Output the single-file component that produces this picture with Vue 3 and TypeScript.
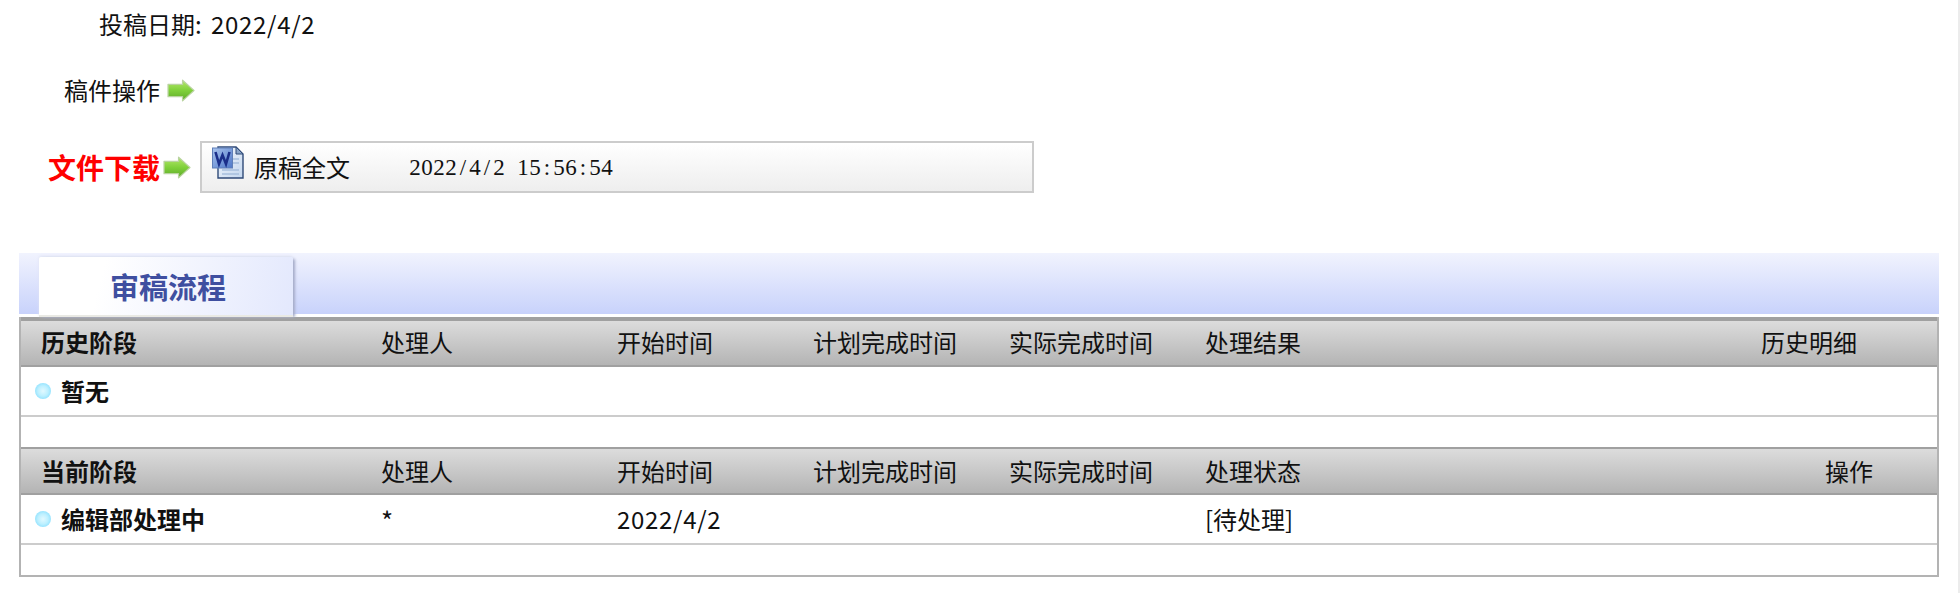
<script setup lang="ts">
interface Section {
  head: string[];
  stage: string;
  handler: string;
  start: string;
  status: string;
  lastPad: boolean;
}

const sections: Section[] = [
  {
    head: ['历史阶段', '处理人', '开始时间', '计划完成时间', '实际完成时间', '处理结果', '历史明细'],
    stage: '暂无',
    handler: '',
    start: '',
    status: '',
    lastPad: false
  },
  {
    head: ['当前阶段', '处理人', '开始时间', '计划完成时间', '实际完成时间', '处理状态', '操作'],
    stage: '编辑部处理中',
    handler: '*',
    start: '2022/4/2',
    status: '[待处理]',
    lastPad: true
  }
];

// the time is set in fixed 12px cells, like the bitmap font it imitates
const fileTime = '2022/4/2 15:56:54'.split('');
</script>

<template>
  <div class="page">
    <div class="submit-date">
      <span class="date-label">投稿日期:</span>
      <span class="date-value">2022/4/2</span>
    </div>

    <div class="action-row">
      <span class="action-label">稿件操作</span>
      <svg class="arrow" viewBox="0 0 27 22" width="28" height="23">
        <defs>
          <linearGradient id="arrowFill" x1="0" y1="0" x2="0" y2="1">
            <stop offset="0" stop-color="#b5e76c" />
            <stop offset="0.5" stop-color="#7fd03a" />
            <stop offset="1" stop-color="#5da92a" />
          </linearGradient>
        </defs>
        <path d="M1 5H15V1L26 11L15 21V17H1Z" fill="url(#arrowFill)" stroke="#b9d3a0" stroke-width="1.2" stroke-linejoin="round" />
      </svg>
    </div>

    <div class="download-row">
      <span class="download-label">文件下载</span>
      <svg class="arrow arrow-small" viewBox="0 0 27 22" width="28" height="23">
        <path d="M1 5H15V1L26 11L15 21V17H1Z" fill="url(#arrowFill)" stroke="#b9d3a0" stroke-width="1.2" stroke-linejoin="round" />
      </svg>
      <div class="file-box">
        <svg class="word-icon" viewBox="0 0 32 33" width="32" height="33">
          <defs>
            <linearGradient id="sheet" x1="0" y1="0" x2="1" y2="1">
              <stop offset="0" stop-color="#f4f8fd" />
              <stop offset="1" stop-color="#c3d6ee" />
            </linearGradient>
            <linearGradient id="tile" x1="0" y1="0" x2="1" y2="1">
              <stop offset="0" stop-color="#a9c4ee" />
              <stop offset="1" stop-color="#4f78c8" />
            </linearGradient>
          </defs>
          <path d="M6 1H24L31 8V32H6Z" fill="url(#sheet)" stroke="#2f4a78" stroke-width="1.4" />
          <path d="M24 1V8H31Z" fill="#8aa5c9" stroke="#2f4a78" stroke-width="1" />
          <path d="M21 13H27M21 17H27M10 24H27M10 28H27" stroke="#a6bfdd" stroke-width="1.4" />
          <rect x="0.5" y="2" width="20" height="20" fill="url(#tile)" stroke="#5f7fb8" stroke-width="1" />
          <path d="M3.5 6L7 18L10.5 9L14 18L17.5 6" fill="none" stroke="#1b2f8a" stroke-width="2.6" />
        </svg>
        <span class="file-name">原稿全文</span>
        <span class="file-time">
          <span v-for="(ch, i) in fileTime" :key="i" class="time-cell">{{ ch }}</span>
        </span>
      </div>
    </div>

    <div class="tab-band">
      <div class="tab">审稿流程</div>
    </div>

    <div class="flow-table">
      <section v-for="sec in sections" :key="sec.stage">
        <div class="grid head">
          <div
            v-for="(title, i) in sec.head"
            :key="title"
            :class="{ 'stage-head': i === 0, 'last-pad': i === 6 && sec.lastPad }"
          >{{ title }}</div>
        </div>
        <div class="grid row">
          <div class="stage-cell"><span class="dot"></span>{{ sec.stage }}</div>
          <div class="handler-cell">{{ sec.handler }}</div>
          <div class="start-cell">{{ sec.start }}</div>
          <div></div>
          <div></div>
          <div>{{ sec.status }}</div>
          <div></div>
        </div>
        <div class="blank"></div>
      </section>
    </div>
  </div>
</template>

<style scoped>
.page {
  box-sizing: border-box;
  width: 1960px;
  height: 593px;
  padding: 0 19px 0 19px;
  border-right: 2px solid #ececec;
  overflow: hidden;
  color: #111;
  font-family: "Noto Sans CJK SC", "Liberation Sans", sans-serif;
  font-size: 24px;
  line-height: 32px;
}

.submit-date {
  display: flex;
  box-sizing: border-box;
  height: 50px;
  align-items: center;
  padding: 0 0 2px 80px;
}

.date-label {
  width: 112px;
}

.date-value,
.start-cell {
  letter-spacing: 0.7px;
}

.action-row {
  display: flex;
  height: 80px;
  align-items: center;
  padding-left: 45px;
}

.arrow {
  margin-left: 7px;
}

.download-row {
  display: flex;
  align-items: center;
  height: 52px;
  margin-top: 11px;
  padding-left: 29px;
}

.download-label {
  color: #f00;
  font-size: 28px;
  font-weight: 700;
}

.arrow-small {
  margin-left: 3px;
  margin-right: 9px;
}

.file-box {
  box-sizing: border-box;
  display: flex;
  align-items: center;
  width: 834px;
  height: 52px;
  padding-left: 10px;
  border: 2px solid #ccc;
  background: linear-gradient(#fff, #eee);
}

.word-icon {
  margin-top: -9px;
}

.file-name {
  margin-left: 10px;
  width: 155px;
}

.file-time {
  display: flex;
  font-family: "Liberation Serif", serif;
  font-size: 23px;
  margin-top: 1px;
}

.time-cell {
  width: 12px;
  min-height: 1px;
  text-align: center;
  white-space: pre;
}

.tab-band {
  display: flex;
  box-sizing: border-box;
  height: 64px;
  margin-top: 60px;
  padding: 4px 0 0 20px;
  background: linear-gradient(#f1f3fe, #c8d2fb 61px, #fff 61px);
}

.tab {
  box-sizing: border-box;
  width: 254px;
  height: 60px;
  padding-left: 4px;
  text-align: center;
  line-height: 58px;
  color: #3f4fa0;
  font-size: 29px;
  font-weight: 700;
  background: linear-gradient(105deg, #fff 25%, #e3e8fd);
  border-bottom: 2px solid #e9e9e4;
  box-shadow: 3px 1px 3px -1px #a4abc8, 0 -1px 3px #dfe3f2;
  border-radius: 2px 2px 0 0;
}

.flow-table {
  box-sizing: border-box;
  height: 260px;
  border: 2px solid #b3b3b3;
  border-top: 0;
}

.grid {
  display: grid;
  grid-template-columns: 360px 236px 196px 196px 196px 556px 176px;
  align-items: center;
}

.head {
  box-sizing: border-box;
  height: 50px;
  padding-bottom: 2px;
  border-top: 4px solid #a0a0a0;
  border-bottom: 2px solid #a0a0a0;
  background: linear-gradient(#dcdcdc, #b4b4b4);
}

section + section .head {
  height: 48px;
  padding-bottom: 0;
  border-top-width: 2px;
}

.stage-head {
  padding-left: 20px;
  font-weight: 700;
  font-size: 24px;
}

.last-pad {
  padding-left: 64px;
}

.row {
  box-sizing: border-box;
  height: 50px;
  border-bottom: 2px solid #ccc;
}

.stage-cell {
  display: flex;
  align-items: center;
  padding-left: 14px;
  font-weight: 700;
}

.dot {
  width: 16px;
  height: 16px;
  margin-right: 10px;
  border-radius: 50%;
  background: radial-gradient(circle, #e2f9ff 0, #bdf0ff 45%, #6fd6fd 100%);
}

.handler-cell {
  font-size: 26px;
  padding-top: 2px;
}

.blank {
  height: 30px;
}
</style>
